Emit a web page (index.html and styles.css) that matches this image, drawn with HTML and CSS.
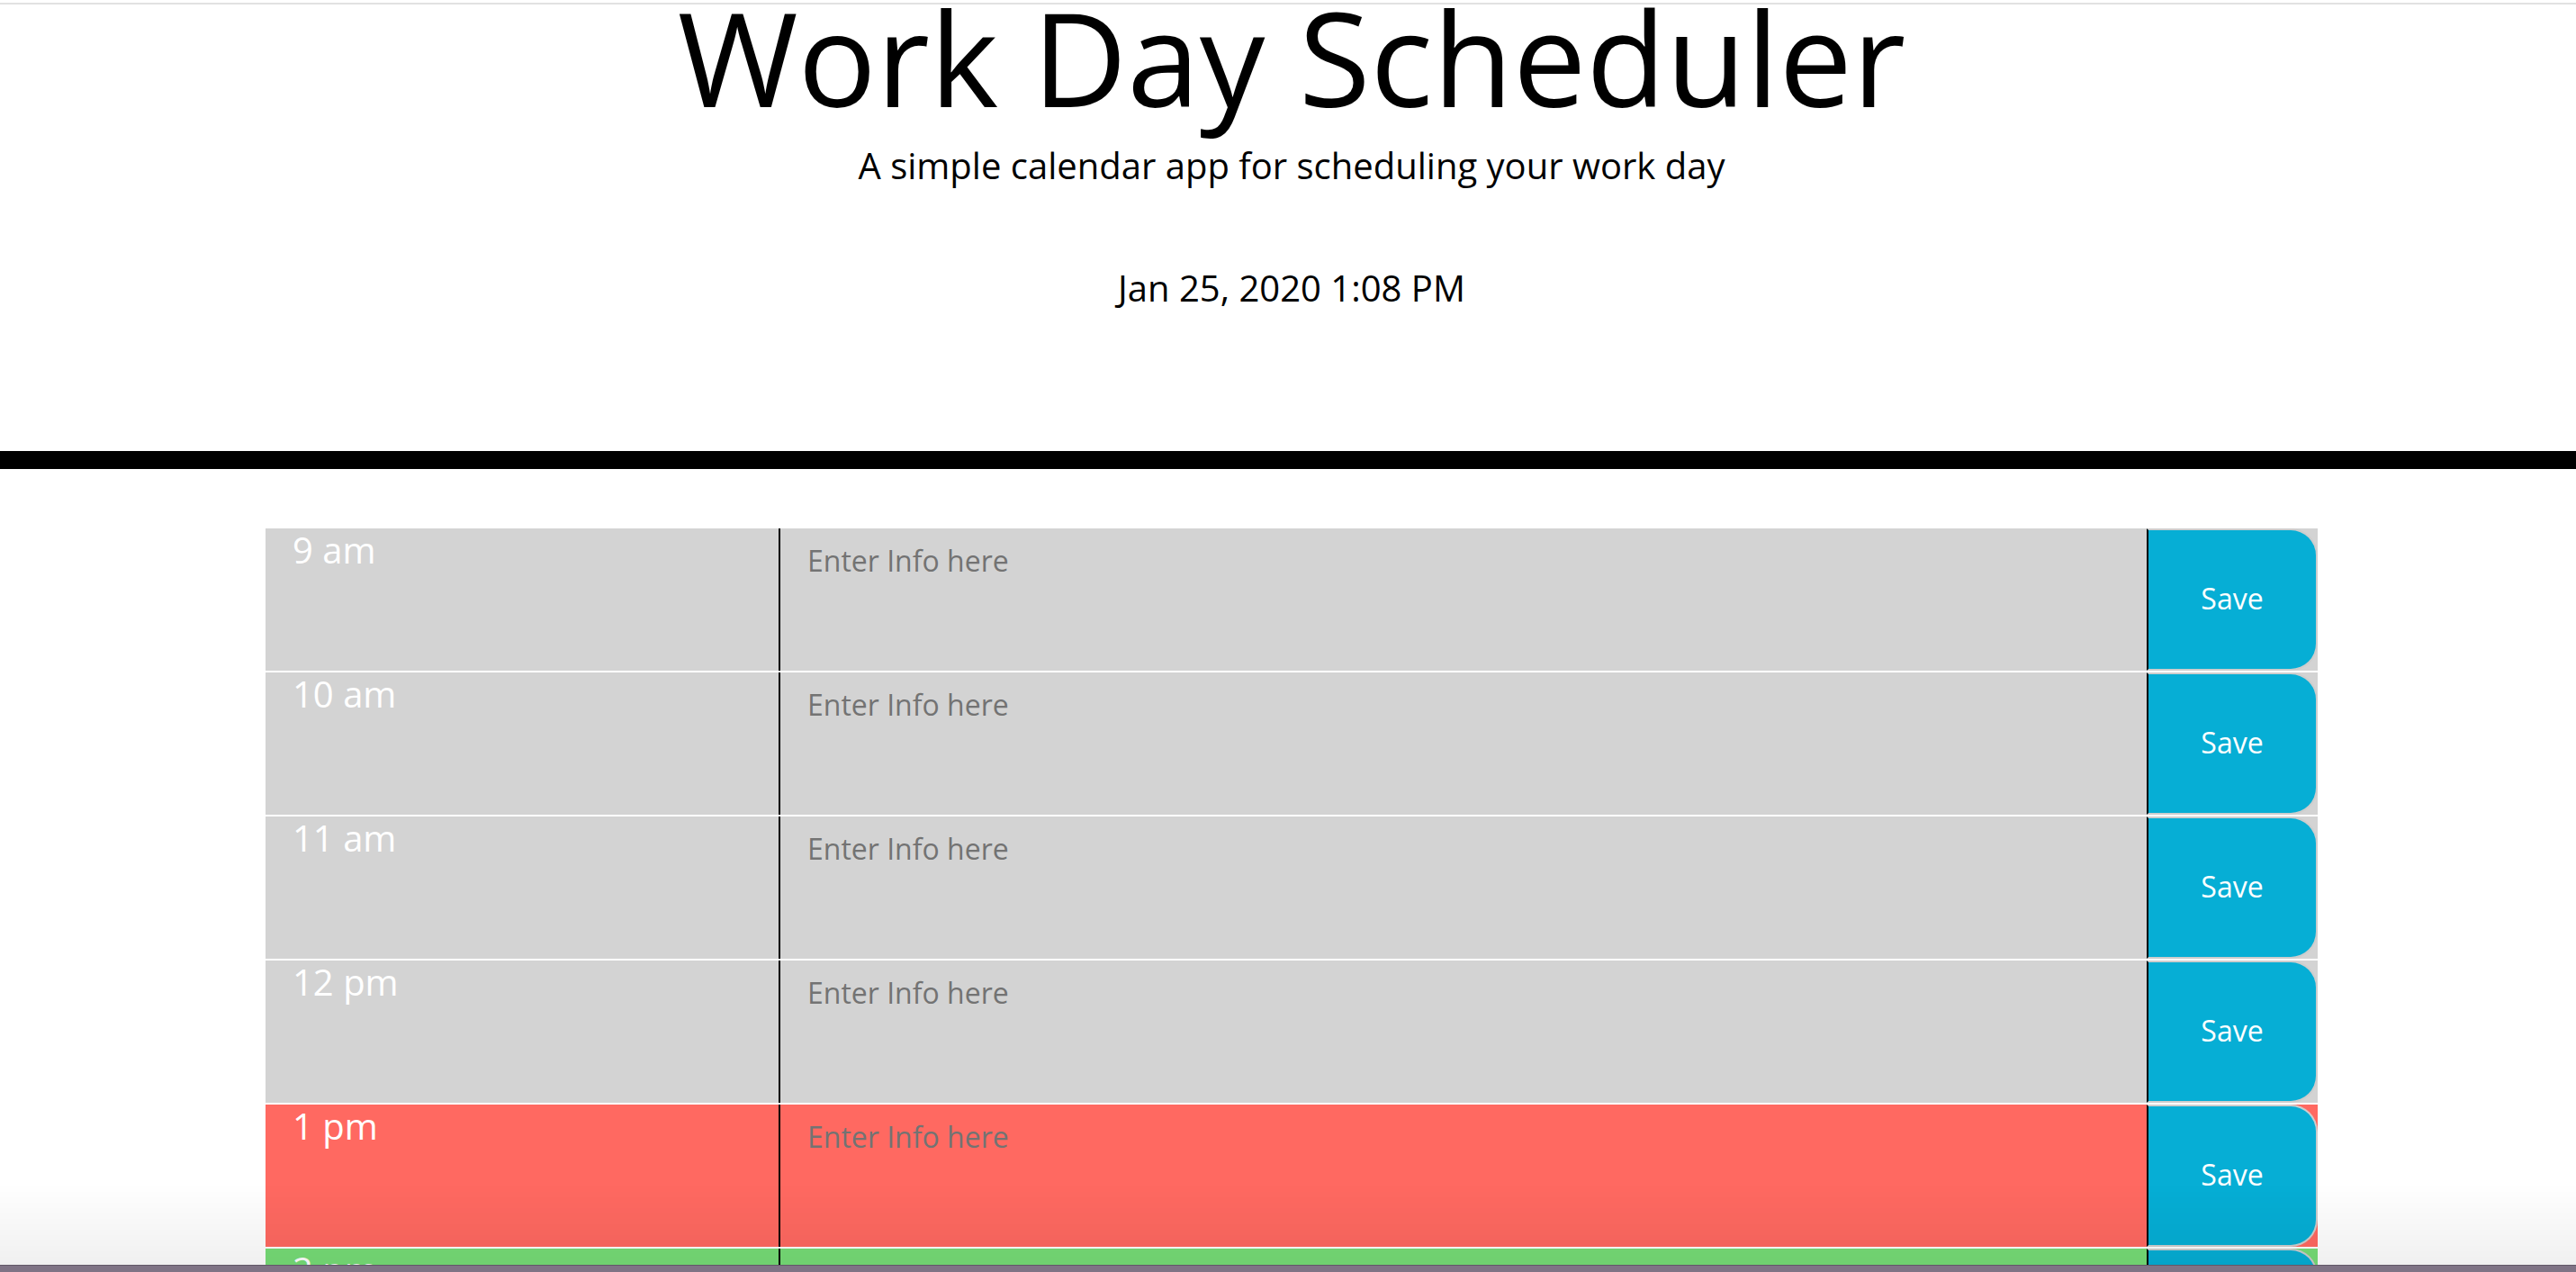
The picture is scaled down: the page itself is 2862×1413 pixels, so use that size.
FILE: index.html
```html
<!DOCTYPE html>
<html lang="en">
<head>
<meta charset="utf-8">
<title>Work Day Scheduler</title>
<link rel="stylesheet" href="styles.css">
</head>
<body>
<div class="chrome-line"></div>
<header class="jumbotron">
  <h1 class="title">Work Day Scheduler</h1>
  <p class="lead tagline">A simple calendar app for scheduling your work day</p>
  <p class="lead current-day">Jan 25, 2020 1:08 PM</p>
</header>
<main class="planner">
  <div class="container">
    <div class="time-block past">
      <div class="hour">9 am</div>
      <textarea class="description" placeholder="Enter Info here"></textarea>
      <button class="save-btn">Save</button>
    </div>
    <div class="time-block past">
      <div class="hour">10 am</div>
      <textarea class="description" placeholder="Enter Info here"></textarea>
      <button class="save-btn">Save</button>
    </div>
    <div class="time-block past">
      <div class="hour">11 am</div>
      <textarea class="description" placeholder="Enter Info here"></textarea>
      <button class="save-btn">Save</button>
    </div>
    <div class="time-block past">
      <div class="hour">12 pm</div>
      <textarea class="description" placeholder="Enter Info here"></textarea>
      <button class="save-btn">Save</button>
    </div>
    <div class="time-block present">
      <div class="hour">1 pm</div>
      <textarea class="description" placeholder="Enter Info here"></textarea>
      <button class="save-btn">Save</button>
    </div>
    <div class="time-block future">
      <div class="hour">2 pm</div>
      <textarea class="description" placeholder="Enter Info here"></textarea>
      <button class="save-btn">Save</button>
    </div>
    <div class="time-block future">
      <div class="hour">3 pm</div>
      <textarea class="description" placeholder="Enter Info here"></textarea>
      <button class="save-btn">Save</button>
    </div>
    <div class="time-block future">
      <div class="hour">4 pm</div>
      <textarea class="description" placeholder="Enter Info here"></textarea>
      <button class="save-btn">Save</button>
    </div>
    <div class="time-block future">
      <div class="hour">5 pm</div>
      <textarea class="description" placeholder="Enter Info here"></textarea>
      <button class="save-btn">Save</button>
    </div>
  </div>
</main>
<div class="window-shade"></div>
<div class="desktop-strip"></div>
</body>
</html>
```

FILE: styles.css
```css
html, body {
  margin: 0;
  padding: 0;
  background: #ffffff;
}

body {
  font-family: "Open Sans", "Noto Sans", sans-serif;
  line-height: 1;
  color: #000000;
  overflow: hidden;
}

.chrome-line {
  position: fixed;
  top: 3px;
  left: 0;
  right: 0;
  height: 2px;
  background: #e2e2e2;
  z-index: 5;
}

.jumbotron {
  text-align: center;
  border-bottom: 20px solid #000000;
  padding: 0 0 161px 8px;
  margin: 0 0 64px;
}

.title {
  font-size: 145px;
  font-weight: 400;
  line-height: 1;
  margin: -10px 0 0;
}

.lead {
  font-size: 40px;
  font-weight: 400;
  margin: 0;
}

.tagline {
  margin-top: 29px;
}

.current-day {
  margin-top: 96px;
}

.planner {
  padding-left: 8px;
}

.container {
  width: 2280px;
  margin: 0 auto;
}

.time-block {
  display: grid;
  grid-template-columns: 570px 1520px 190px;
  height: 160px;
  border-top: 2px solid #ffffff;
  box-sizing: border-box;
}

.past {
  background: #d3d3d3;
}

.present {
  background: #ff6961;
}

.future {
  background: #77dd77;
}

.hour {
  color: #ffffff;
  font-size: 40px;
  padding: 4px 30px 0;
}

.description {
  font-family: inherit;
  font-size: 32px;
  line-height: 1;
  color: #000000;
  background: transparent;
  border: none;
  border-left: 2px solid #000000;
  resize: none;
  padding: 20px 30px;
  margin: 0;
  box-sizing: border-box;
  height: 100%;
  width: 100%;
}

.description::placeholder {
  color: #737373;
  opacity: 1;
}

.save-btn {
  font-family: inherit;
  font-size: 32px;
  color: #ffffff;
  background: #06aed5;
  border: 2px solid #cdcdcd;
  border-left: 2px solid #000000;
  border-radius: 0 30px 30px 0;
  margin: 0;
  padding: 0 0 3px;
}

.window-shade {
  position: fixed;
  left: 0;
  right: 0;
  bottom: 8px;
  height: 90px;
  background: linear-gradient(to bottom, rgba(0, 0, 0, 0), rgba(0, 0, 0, 0.06));
  pointer-events: none;
  z-index: 5;
}

.desktop-strip {
  position: fixed;
  left: 0;
  right: 0;
  bottom: 0;
  height: 8px;
  background: #7f7385;
  border-top: 1px solid #625868;
  box-sizing: border-box;
  z-index: 6;
}
```
